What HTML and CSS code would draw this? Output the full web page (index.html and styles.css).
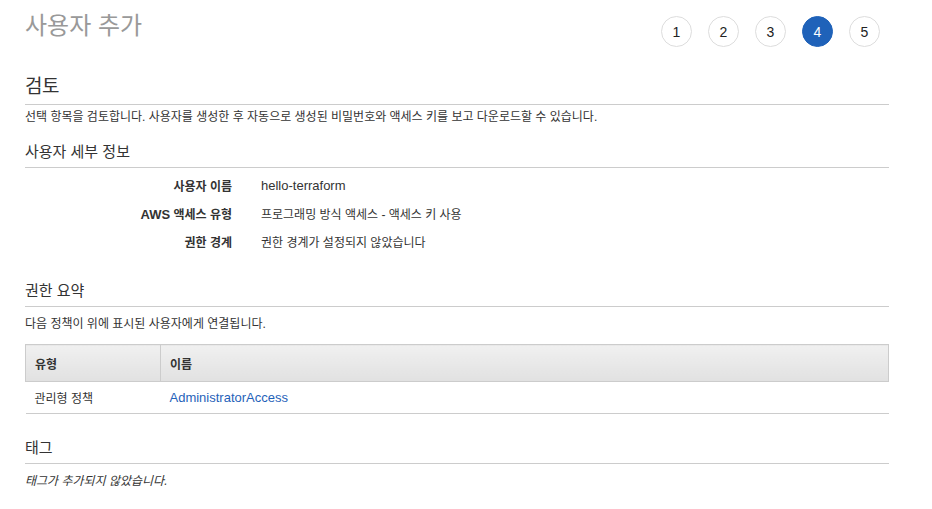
FILE: index.html
```html
<!DOCTYPE html>
<html lang="ko">
<head>
  <meta charset="UTF-8">
  <meta name="viewport" content="width=device-width, initial-scale=1.0">
  <title>사용자 추가</title>
  <link rel="stylesheet" href="styles.css">
</head>
<body>
  <div class="wizard">
    <div class="wizard-header">
      <h1 class="page-title">사용자 추가</h1>
      <ol class="steps">
        <li class="step">1</li>
        <li class="step">2</li>
        <li class="step">3</li>
        <li class="step active">4</li>
        <li class="step">5</li>
      </ol>
    </div>

    <h2 class="section-title">검토</h2>
    <p class="section-desc">선택 항목을 검토합니다. 사용자를 생성한 후 자동으로 생성된 비밀번호와 액세스 키를 보고 다운로드할 수 있습니다.</p>

    <h3 class="sub-title">사용자 세부 정보</h3>
    <div class="details">
      <div class="detail-label">사용자 이름</div>
      <div class="detail-value"><span class="en">hello-terraform</span></div>
      <div class="detail-label"><span class="en">AWS</span> 액세스 유형</div>
      <div class="detail-value">프로그래밍 방식 액세스 - 액세스 키 사용</div>
      <div class="detail-label">권한 경계</div>
      <div class="detail-value">권한 경계가 설정되지 않았습니다</div>
    </div>

    <h3 class="sub-title spaced">권한 요약</h3>
    <p class="sub-desc">다음 정책이 위에 표시된 사용자에게 연결됩니다.</p>
    <table class="policy-table">
      <thead>
        <tr>
          <th class="col-type">유형</th>
          <th>이름</th>
        </tr>
      </thead>
      <tbody>
        <tr>
          <td>관리형 정책</td>
          <td><a class="en link" href="#">AdministratorAccess</a></td>
        </tr>
      </tbody>
    </table>

    <h3 class="sub-title tags">태그</h3>
    <p class="sub-desc empty">태그가 추가되지 않았습니다.</p>
  </div>
</body>
</html>
```

FILE: styles.css
```css
body {
  margin: 0;
  font-family: 'Liberation Sans', 'Noto Sans CJK KR', sans-serif;
  font-size: 12px;
  color: #333;
  background: #fff;
}
.en {
  font-size: 13px;
}
.wizard {
  width: 864px;
  padding: 10px 25px 0;
}
.wizard-header {
  display: flex;
  justify-content: space-between;
  align-items: flex-start;
  height: 40px;
}
.page-title {
  margin: 0;
  font-size: 24px;
  line-height: 32px;
  font-weight: 400;
  color: #999;
}
.steps {
  display: flex;
  gap: 16px;
  list-style: none;
  margin: 6px 9px 0 0;
  padding: 0;
}
.step {
  width: 29px;
  height: 29px;
  border: 1px solid #ddd;
  border-radius: 50%;
  display: flex;
  align-items: center;
  justify-content: center;
  font-size: 14px;
  color: #222;
  background: #fff;
}
.step.active {
  background: #1f62b9;
  border-color: #1f62b9;
  color: #fff;
}
.section-title {
  margin: 25px 0 0;
  padding-bottom: 5px;
  border-bottom: 1px solid #ccc;
  font-size: 19px;
  line-height: 24px;
  font-weight: 400;
  letter-spacing: -0.6px;
  color: #333;
}
.section-desc {
  margin: 3px 0 0;
  line-height: 18px;
}
.sub-title {
  margin: 16px 0 0;
  padding-bottom: 5px;
  border-bottom: 1px solid #ccc;
  font-size: 15px;
  line-height: 20px;
  font-weight: 400;
  color: #333;
}
.sub-title.spaced {
  margin-top: 26px;
}
.sub-title.tags {
  margin-top: 24px;
}
.details {
  display: grid;
  grid-template-columns: 207px 1fr;
  grid-auto-rows: 28px;
  column-gap: 29px;
  margin-top: 3px;
  align-items: center;
}
.detail-label {
  text-align: right;
  font-weight: 700;
}
.sub-desc {
  margin: 8px 0 0;
  line-height: 18px;
}
.sub-desc.empty {
  font-style: italic;
}
.policy-table {
  width: 100%;
  margin-top: 11px;
  border-collapse: collapse;
}
.policy-table th {
  height: 36px;
  padding: 0 9px;
  text-align: left;
  font-weight: 700;
  background: linear-gradient(#f0f0f0, #e1e1e1);
  border: 1px solid #ccc;
}
.policy-table th.col-type {
  width: 116px;
}
.policy-table td {
  height: 31px;
  padding: 0 9px;
  border-bottom: 1px solid #ccc;
}
.link {
  color: #1f62b9;
  text-decoration: none;
}
```
